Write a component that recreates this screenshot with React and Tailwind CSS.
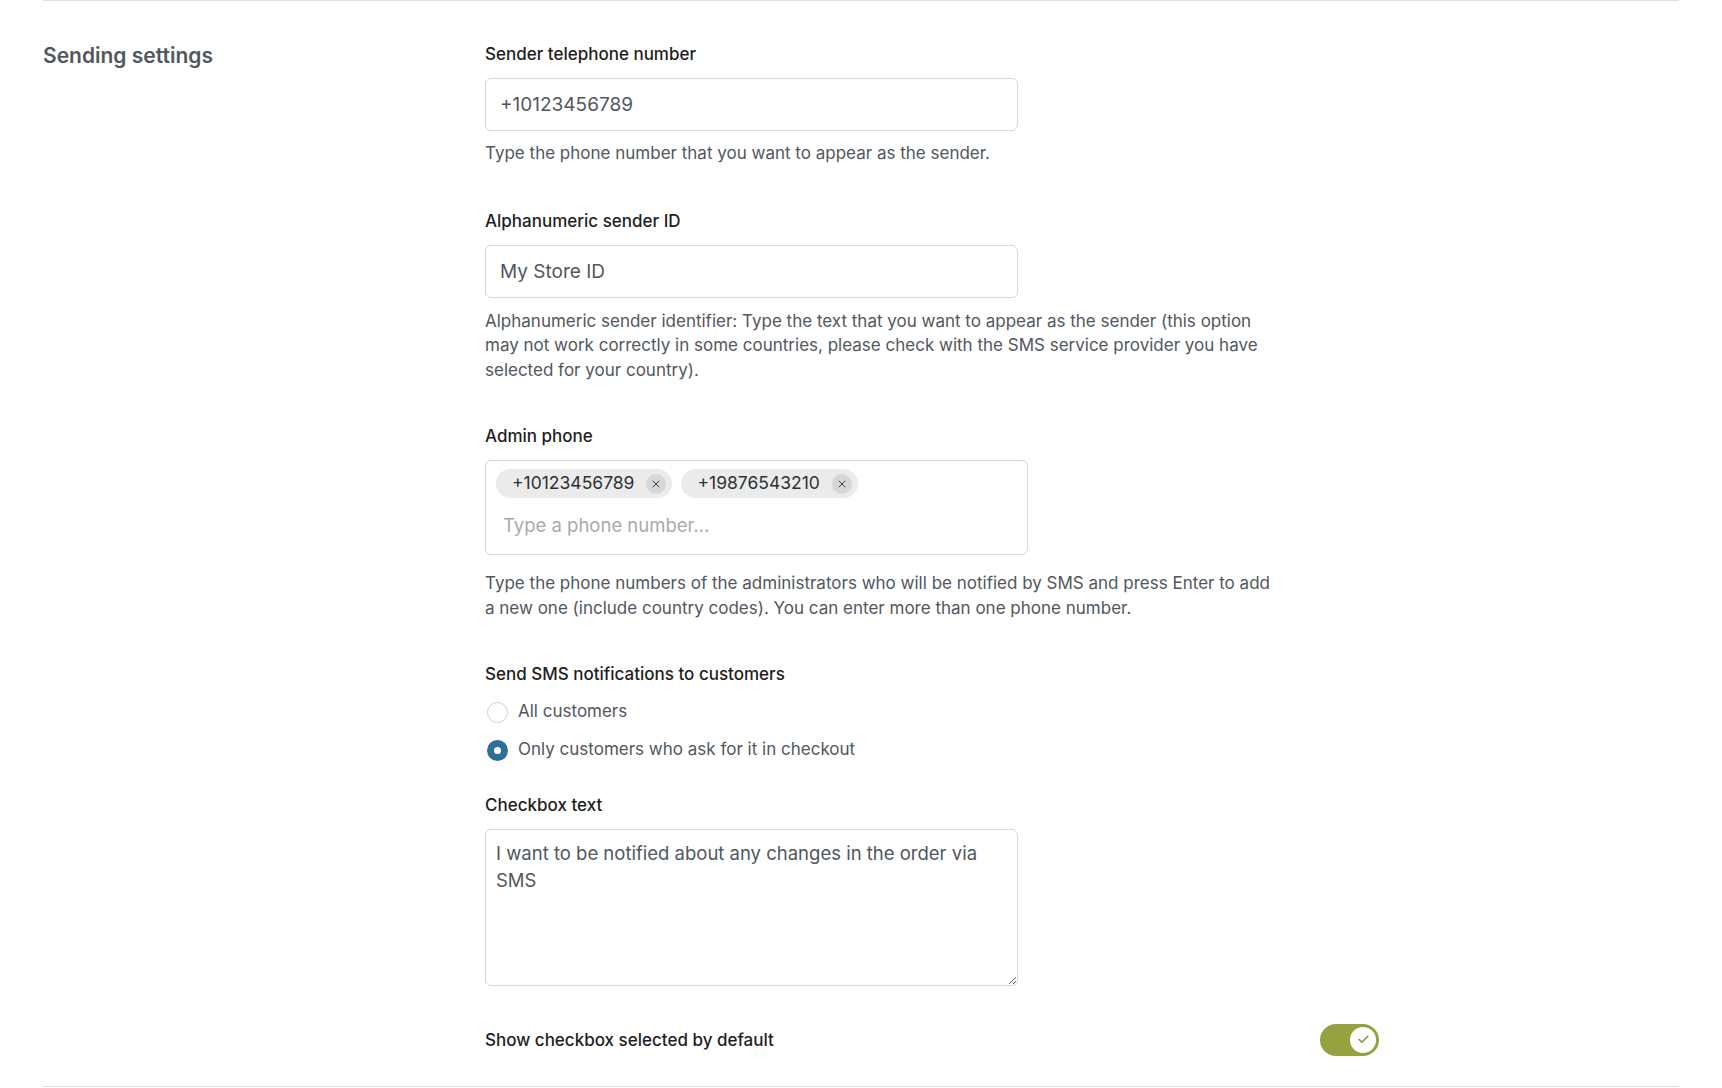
import { X, Check } from "lucide-react";

function Label({ children }) {
  return <div className="text-[17px] leading-6 font-medium text-[#1e1e1e]">{children}</div>;
}

function Help({ children, className = "" }) {
  return (
    <p className={`max-w-[786px] text-[17px] leading-[24.5px] text-[#50575e] ${className}`}>{children}</p>
  );
}

function Chip({ value }) {
  return (
    <span className="flex h-[29px] items-center rounded-full bg-[#ebebeb] pl-4 pr-[6px] text-[17.5px] text-[#2c3338]">
      {value}
      <span className="ml-[12px] flex h-[20px] w-[20px] items-center justify-center rounded-full bg-[#d6d6d6]">
        <X size={12} strokeWidth={2} className="text-[#3c434a]" />
      </span>
    </span>
  );
}

function Radio({ checked, label, className = "" }) {
  return (
    <label className={`flex h-6 items-center gap-[10px] ${className}`}>
      {checked ? (
        <span className="ml-[2px] flex h-[21px] w-[21px] items-center justify-center rounded-full bg-[#2e6f98]">
          <span className="h-[7px] w-[7px] rounded-full bg-white" />
        </span>
      ) : (
        <span className="ml-[2px] h-[21px] w-[21px] rounded-full border border-[#cfcfcf] bg-white" />
      )}
      <span className="text-[17px] text-[#50575e]">{label}</span>
    </label>
  );
}

export default function App() {
  const admins = ["+10123456789", "+19876543210"];

  return (
    <div className="min-h-screen bg-white px-[42px] font-['Inter','Noto_Sans',sans-serif]">
      <section className="mx-px flex border-y border-[#e0e0e0] pt-[41px] pb-[30px]">
        {/* left title */}
        <div className="w-[442px] shrink-0">
          <h2 className="text-[21px] leading-7 font-semibold text-[#50575e]">Sending settings</h2>
        </div>

        {/* right fields */}
        <div className="w-[894px]">
          <Label>Sender telephone number</Label>
          <input
            readOnly
            defaultValue="+10123456789"
            className="mt-3 block h-[53px] w-[533px] rounded-[6px] border border-[#d6d6d6] px-[14px] text-[19px] text-[#50575e] outline-none"
          />
          <Help className="mt-[10px]">Type the phone number that you want to appear as the sender.</Help>

          <div className="mt-[43px]">
            <Label>Alphanumeric sender ID</Label>
          </div>
          <input
            readOnly
            defaultValue="My Store ID"
            className="mt-3 block h-[53px] w-[533px] rounded-[6px] border border-[#d6d6d6] px-[14px] text-[19px] text-[#50575e] outline-none"
          />
          <Help className="mt-[11px]">
            Alphanumeric sender identifier: Type the text that you want to appear as the sender (this option
            may not work correctly in some countries, please check with the SMS service provider you have
            selected for your country).
          </Help>

          <div className="mt-[42px]">
            <Label>Admin phone</Label>
          </div>
          <div className="mt-3 h-[95px] w-[543px] rounded-[6px] border border-[#d6d6d6] px-[10px] pt-2">
            <div className="flex gap-[9px]">
              {admins.map((a) => (
                <Chip key={a} value={a} />
              ))}
            </div>
            <input
              placeholder="Type a phone number..."
              className="mt-[14px] block w-full px-[7px] text-[18.5px] text-[#50575e] placeholder:text-[#a7aaad] outline-none"
            />
          </div>
          <Help className="mt-4">
            Type the phone numbers of the administrators who will be notified by SMS and press Enter to add
            a new one (include country codes). You can enter more than one phone number.
          </Help>

          <div className="mt-[42px]">
            <Label>Send SMS notifications to customers</Label>
          </div>
          <Radio label="All customers" className="mt-[14px]" />
          <Radio checked label="Only customers who ask for it in checkout" className="mt-[14px]" />

          <div className="mt-[31px]">
            <Label>Checkbox text</Label>
          </div>
          <textarea
            readOnly
            defaultValue="I want to be notified about any changes in the order via SMS"
            className="mt-3 block h-[157px] w-[533px] rounded-[6px] border border-[#d6d6d6] pl-[10px] pr-[30px] pt-[10px] text-[18.5px] leading-[27px] text-[#50575e] outline-none"
          />

          <div className="mt-[37px] flex h-[33px] items-center justify-between">
            <Label>Show checkbox selected by default</Label>
            <button className="flex h-[32px] w-[59px] items-center justify-end rounded-full bg-[#98a13f] p-[1px]">
              <span className="flex h-[30px] w-[30px] items-center justify-center rounded-full border-2 border-[#98a13f] bg-white">
                <Check size={13} strokeWidth={3} className="text-[#86913a]" />
              </span>
            </button>
          </div>
        </div>
      </section>
    </div>
  );
}
